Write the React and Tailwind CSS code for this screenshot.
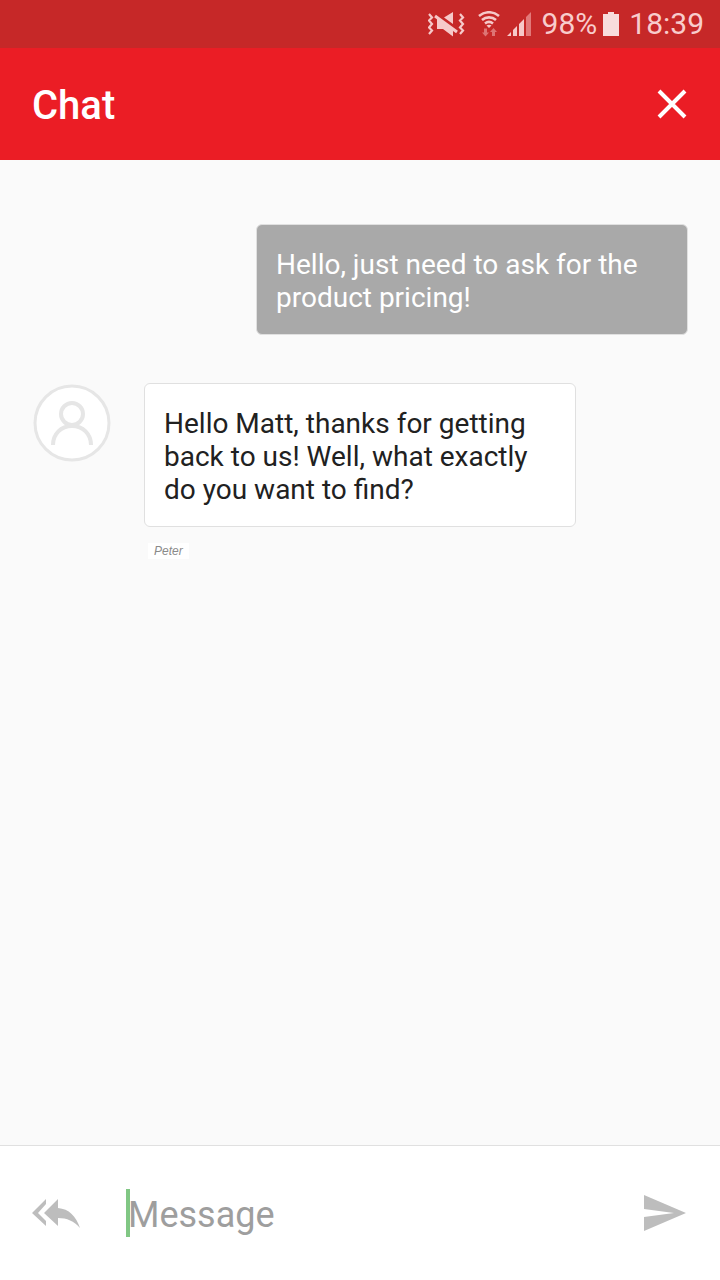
import { useState } from 'react'

const MESSAGES = [
  { id: 1, isOwn: true, text: 'Hello, just need to ask for the product pricing!' },
  { id: 2, isOwn: false, author: 'Peter', text: 'Hello Matt, thanks for getting back to us! Well, what exactly do you want to find?' },
]

function VibrateIcon() {
  return (
    <svg width="38" height="26" viewBox="0 0 38 26" fill="none" className="text-[#f6c9c9]" aria-hidden="true">
      <path d="M1 3l3 3.500-3 3 3 3.500-3 3.500 3 3-3 3.500M32 3l3 3.500-3 3 3 3.500-3 3.500 3 3-3 3.500" stroke="currentColor" strokeWidth="2.200" />
      <path d="M9 7l16 12v6.500L15 18H9zM16 6.500l9-5.500v12z" fill="currentColor" />
      <path d="M7 5l22 16" stroke="currentColor" strokeWidth="3" />
    </svg>
  )
}

function WifiIcon() {
  return (
    <svg width="22" height="26" viewBox="0 0 22 26" fill="none" aria-hidden="true">
      <path d="M1 5c6-5 14-5 20 0M4 9c4-3.500 10-3.500 14 0M7 12.500c2.500-2 5.500-2 8 0" stroke="#f6c9c9" strokeWidth="2.600" />
      <path d="M8.500 14.500c1.500-1 3.500-1 5 0L11 17z" fill="#f6c9c9" />
      <path d="M6 17.500h3v4h2L7.500 25.500 4 21.500h2zM14 25h3v-4h2l-3.500-4-3.500 4h2z" fill="#dd7474" />
    </svg>
  )
}

function SignalIcon() {
  return (
    <svg width="26" height="26" viewBox="0 0 26 26" aria-hidden="true">
      <path d="M1 25l4-4v4zM7 19l4-4v10H7zM13 13l5-5v17h-5z" fill="#f6c9c9" />
      <path d="M20 6l5-5v24h-5z" fill="#e27979" />
    </svg>
  )
}

function StatusBar() {
  return (
    <div className="flex h-12 shrink-0 items-center justify-end bg-[#c62828] pr-4 text-3xl text-[#f8cccc]">
      <VibrateIcon />
      <span className="ml-3"><WifiIcon /></span>
      <span className="ml-1.5"><SignalIcon /></span>
      <span className="ml-2.5">98%</span>
      <svg width="16" height="24" viewBox="0 0 16 24" fill="#f8dcdc" className="ml-1.5" aria-hidden="true">
        <path d="M5 0h6v2h5v22H0V2h5z" />
      </svg>
      <span className="ml-2.5">18:39</span>
    </div>
  )
}

function Avatar() {
  return (
    <svg width="80" height="80" viewBox="0 0 80 80" fill="none" stroke="#e6e6e6" className="shrink-0" aria-hidden="true">
      <circle cx="40" cy="40" r="37" fill="#fff" strokeWidth="3" />
      <circle cx="40" cy="31" r="11" strokeWidth="4" />
      <path d="M21 62c0-11 8-19 19-19s19 8 19 19" strokeWidth="4" />
    </svg>
  )
}

function Message({ message }) {
  if (message.isOwn) {
    return (
      <div className="flex justify-end">
        <p className="w-full max-w-[432px] rounded-md border border-[#e0e0e0] bg-[#a9a9a9] px-[19px] pt-[23px] pb-5 text-white">{message.text}</p>
      </div>
    )
  }
  return (
    <div className="flex items-start gap-8">
      <Avatar />
      <div>
        <p className="max-w-[432px] rounded-md border border-[#e0e0e0] bg-white px-[19px] pt-[23px] pb-5 text-[#212121]">{message.text}</p>
        <span className="mt-4 ml-1 inline-block bg-white px-1.5 font-['Liberation_Sans',sans-serif] text-xs leading-4 text-[#8a8a8a] italic">{message.author}</span>
      </div>
    </div>
  )
}

export default function App() {
  const [draft, setDraft] = useState('')

  return (
    <div className="flex min-h-screen flex-col bg-[#fafafa] font-[Roboto,sans-serif]">
      <StatusBar />

      <header className="flex h-28 shrink-0 items-center justify-between bg-[#eb1d25] px-8 text-white">
        <h1 className="pt-1 text-[40px] font-medium">Chat</h1>
        <button type="button" aria-label="Close chat">
          <svg width="32" height="32" viewBox="0 0 32 32" fill="none" stroke="currentColor" strokeWidth="4">
            <path d="M3 3l26 26M29 3L3 29" />
          </svg>
        </button>
      </header>

      <main className="flex flex-1 flex-col gap-12 px-8 pt-16 text-[28px] leading-[33px]">
        {MESSAGES.map((message) => <Message key={message.id} message={message} />)}
      </main>

      <form
        onSubmit={(event) => { event.preventDefault(); setDraft('') }}
        className="flex h-[135px] shrink-0 items-center border-t border-[#e0e0e0] bg-white px-8 text-[#bdbdbd]"
      >
        <button type="button" aria-label="Reply to all">
          <svg width="48" height="30" viewBox="0 0 48 30" fill="currentColor">
            <path d="M14 1v5L6 15l8 8v5L0 15zM26 1v9c11 1 18 8 22 20-6-7-13-10-22-10v8L12 15z" />
          </svg>
        </button>
        <div className="relative ml-12 flex-1">
          <input
            type="text"
            aria-label="Message"
            placeholder="Message"
            value={draft}
            onChange={(event) => setDraft(event.target.value)}
            className="block h-12 w-full bg-transparent pt-1 text-4xl text-[#212121] caret-[#4caf50] outline-none placeholder:text-[#9e9e9e]"
          />
          {!draft && <span className="absolute inset-y-0 -left-0.5 w-1 bg-[#4caf50]/70" />}
        </div>
        <button type="submit" aria-label="Send">
          <svg width="44" height="36" viewBox="0 0 44 36" fill="currentColor">
            <path d="M0 0l42 18L0 36V22l30-4L0 14z" />
          </svg>
        </button>
      </form>
    </div>
  )
}
